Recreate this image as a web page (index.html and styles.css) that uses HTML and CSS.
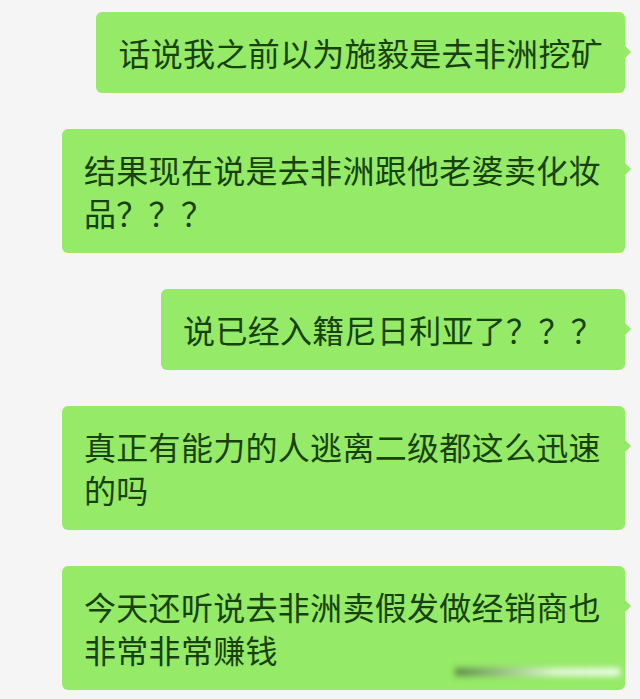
FILE: index.html
```html
<!DOCTYPE html>
<html lang="zh-CN">
<head>
  <meta charset="UTF-8">
  <title>聊天记录</title>
  <link rel="stylesheet" href="styles.css">
</head>
<body>
  <div class="chat">
    <div class="bubble">话说我之前以为施毅是去非洲挖矿</div>
    <div class="bubble">结果现在说是去非洲跟他老婆卖化妆品？？？</div>
    <div class="bubble">说已经入籍尼日利亚了？？？</div>
    <div class="bubble">真正有能力的人逃离二级都这么迅速的吗</div>
    <div class="bubble last">今天还听说去非洲卖假发做经销商也非常非常赚钱</div>
  </div>
  <div class="watermark"></div>
</body>
</html>
```

FILE: styles.css
```css
body {
  margin: 0;
  background: #f4f5f4;
  font-family: "Noto Sans CJK SC", "Liberation Sans", sans-serif;
  width: 640px;
  height: 699px;
  overflow: hidden;
  position: relative;
}
.chat {
  display: flex;
  flex-direction: column;
  align-items: flex-end;
  gap: 36px;
  padding: 12px 15px 0 0;
}
.bubble {
  position: relative;
  background: #95ea67;
  color: #17420f;
  font-size: 32px;
  line-height: 43px;
  padding: 19px 22px 19px 22px;
  border-radius: 6px;
  max-width: 519px;
  letter-spacing: 0.3px;
}
.bubble::after {
  content: "";
  position: absolute;
  right: -6px;
  top: 33px;
  border-left: 7px solid #95ea67;
  border-top: 7px solid transparent;
  border-bottom: 7px solid transparent;
}
.watermark {
  position: absolute;
  left: 455px;
  top: 668px;
  width: 165px;
  height: 8px;
  background: linear-gradient(to right, rgba(60,90,50,0.7), rgba(240,245,235,0.9) 60%, rgba(255,255,255,0.9));
  filter: blur(3px);
}
```
